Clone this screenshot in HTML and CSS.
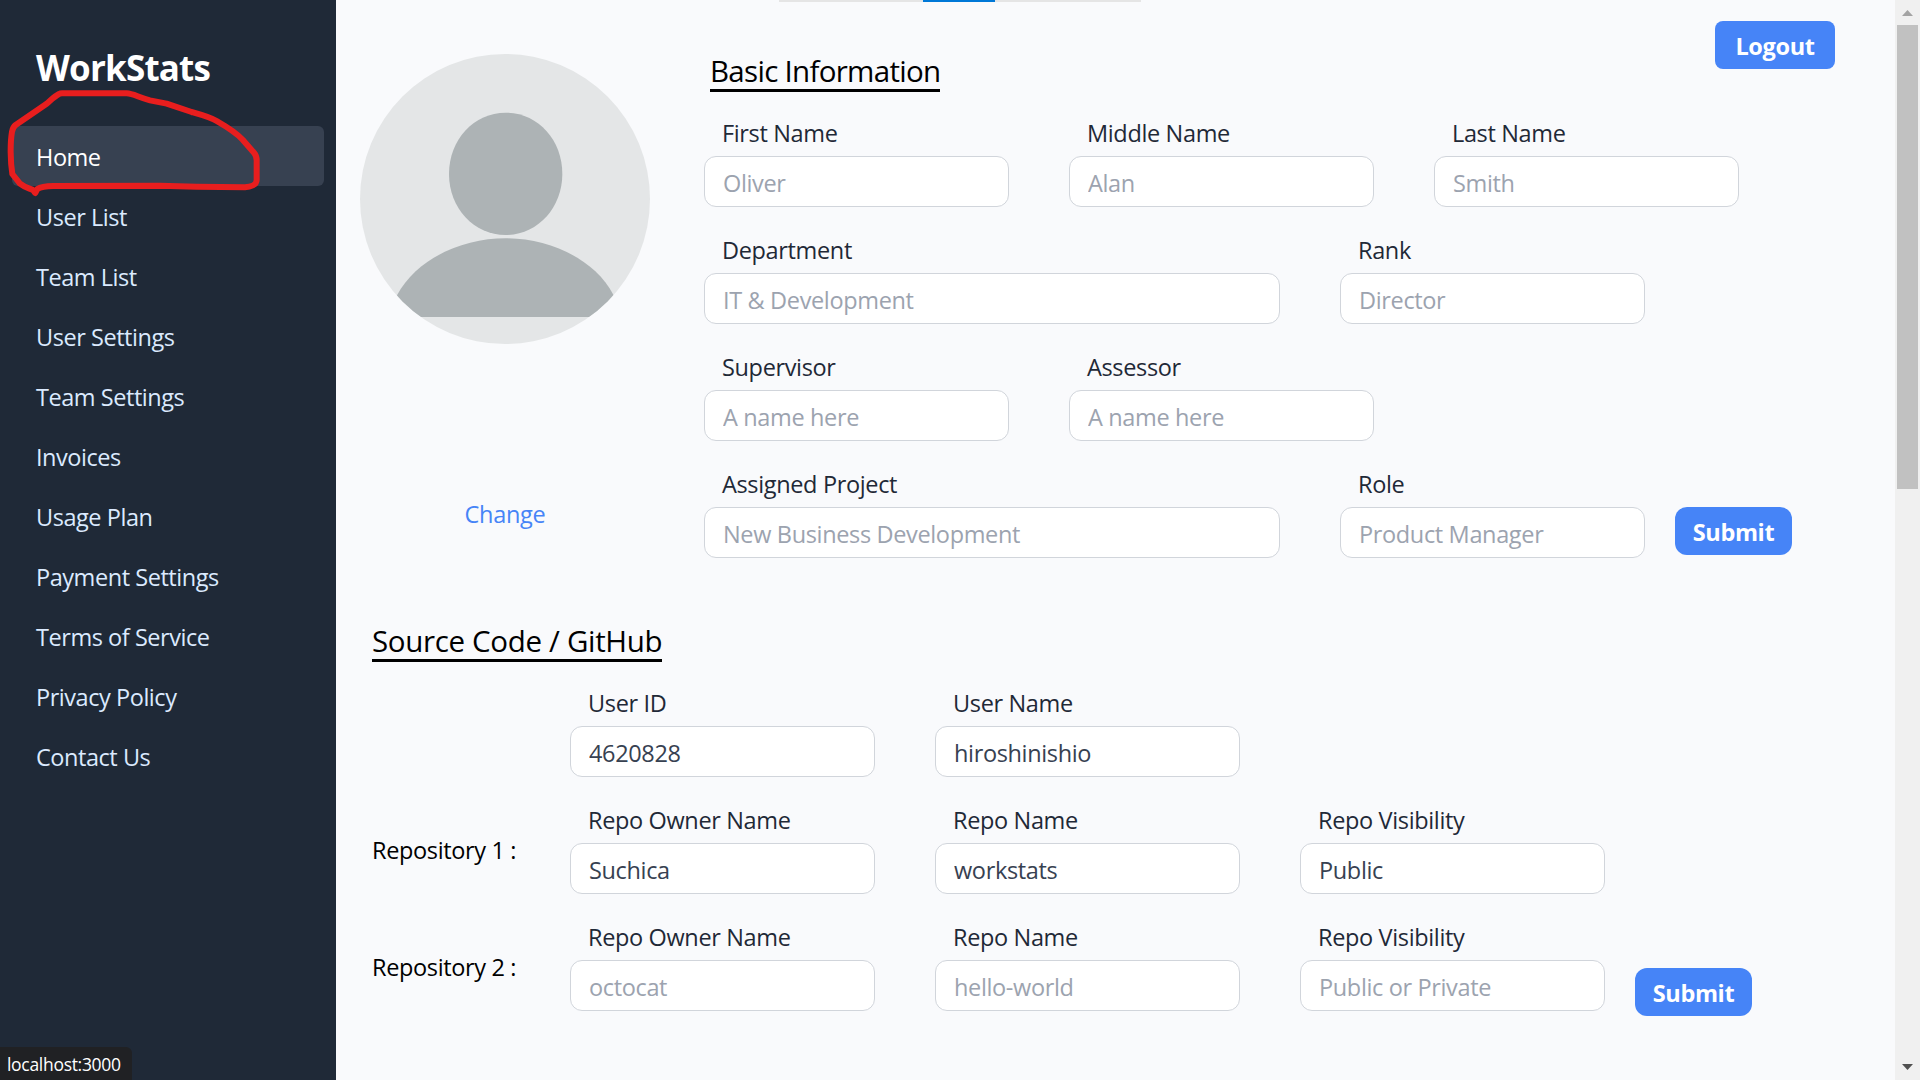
FILE: index.html
```html
<!DOCTYPE html>
<html lang="en">
<head>
<meta charset="utf-8">
<title>WorkStats</title>
<link rel="stylesheet" href="styles.css">
</head>
<body>
<div class="app">
  <aside class="sidebar">
    <h1 class="brand">WorkStats</h1>
    <nav class="nav">
      <a class="nav-item active">Home</a>
      <a class="nav-item">User List</a>
      <a class="nav-item">Team List</a>
      <a class="nav-item">User Settings</a>
      <a class="nav-item">Team Settings</a>
      <a class="nav-item">Invoices</a>
      <a class="nav-item">Usage Plan</a>
      <a class="nav-item">Payment Settings</a>
      <a class="nav-item">Terms of Service</a>
      <a class="nav-item">Privacy Policy</a>
      <a class="nav-item">Contact Us</a>
    </nav>
  </aside>

  <main class="main">
    <section class="profile">
      <div class="photo">
        <svg class="avatar" viewBox="0 0 870 870">
          <defs><clipPath id="round"><circle cx="435" cy="435" r="435"/></clipPath></defs>
          <g clip-path="url(#round)">
            <rect width="870" height="870" fill="#e4e6e7"/>
            <path fill="#adb3b5" d="M437 176C532 176 607 256 607 360C607 462 532 543 437 543C342 543 267 462 267 360C267 256 342 176 437 176Z"/>
            <path fill="#adb3b5" d="M90 789L111 724C170 612 310 553 437 553C565 553 702 612 760 722L790 789Z"/>
          </g>
        </svg>
        <a class="change">Change</a>
      </div>
      <div class="info">
        <h2 class="heading">Basic Information</h2>
        <div class="rows">
          <div class="row">
            <label class="field"><span class="label">First Name</span><input class="input" placeholder="Oliver"></label>
            <label class="field"><span class="label">Middle Name</span><input class="input" placeholder="Alan"></label>
            <label class="field"><span class="label">Last Name</span><input class="input" placeholder="Smith"></label>
          </div>
          <div class="row">
            <label class="field wide"><span class="label">Department</span><input class="input" placeholder="IT &amp; Development"></label>
            <label class="field"><span class="label">Rank</span><input class="input" placeholder="Director"></label>
          </div>
          <div class="row">
            <label class="field"><span class="label">Supervisor</span><input class="input" placeholder="A name here"></label>
            <label class="field"><span class="label">Assessor</span><input class="input" placeholder="A name here"></label>
          </div>
          <div class="row">
            <label class="field wide"><span class="label">Assigned Project</span><input class="input" placeholder="New Business Development"></label>
            <label class="field"><span class="label">Role</span><input class="input" placeholder="Product Manager"></label>
            <button class="button submit">Submit</button>
          </div>
        </div>
      </div>
    </section>

    <section class="source">
      <h2 class="heading">Source Code / GitHub</h2>
      <div class="rows">
        <div class="row">
          <span class="repo"></span>
          <label class="field"><span class="label">User ID</span><input class="input" value="4620828"></label>
          <label class="field"><span class="label">User Name</span><input class="input" value="hiroshinishio" spellcheck="false"></label>
        </div>
        <div class="row">
          <span class="repo">Repository 1 :</span>
          <label class="field"><span class="label">Repo Owner Name</span><input class="input" value="Suchica"></label>
          <label class="field"><span class="label">Repo Name</span><input class="input" value="workstats"></label>
          <label class="field"><span class="label">Repo Visibility</span><input class="input" value="Public"></label>
        </div>
        <div class="row">
          <span class="repo">Repository 2 :</span>
          <label class="field"><span class="label">Repo Owner Name</span><input class="input" placeholder="octocat"></label>
          <label class="field"><span class="label">Repo Name</span><input class="input" placeholder="hello-world"></label>
          <label class="field"><span class="label">Repo Visibility</span><input class="input" placeholder="Public or Private"></label>
          <button class="button submit low">Submit</button>
        </div>
      </div>
    </section>
  </main>

  <div class="scrollbar">
    <svg class="arrow" viewBox="0 0 25 25"><path d="M7 16L12.500 10L18 16Z" fill="#a3a3a3"/></svg>
    <div class="thumb"></div>
    <svg class="arrow down" viewBox="0 0 25 25"><path d="M7 9L12.500 15L18 9Z" fill="#505050"/></svg>
  </div>
</div>

<button class="button logout">Logout</button>
<div class="progress"><div class="progress-bar"></div></div>
<svg class="marker" viewBox="0 0 810 600">
  <path d="M105 578L100 571C92 566 75 563 60 551L37 522C31 485 30 430 36 395Q38 382 48 374L140 311C155 298 165 288 177 282Q182 279 190 280H380C400 281 415 292 450 301L500 311L575 336C600 343 630 351 650 363C690 386 715 405 728 419L762 458Q771 468 770 485V540C770 555 750 561 735 562L590 560L480 557L160 558Q125 559 112 567L106 579"/>
</svg>
<div class="status">localhost:3000</div>
</body>
</html>
```
FILE: styles.css
```css
* {
  box-sizing: border-box;
  margin: 0;
}

body {
  width: 1920px;
  height: 1080px;
  overflow: hidden;
  background: #f9fafc;
  color: #000;
  font: 23.500px/36px "Segoe UI", "Open Sans", "Noto Sans", sans-serif;
  letter-spacing: -0.350px;
}

.app {
  display: flex;
  height: 1080px;
}

.sidebar {
  width: 336px;
  padding: 44px 12px 0;
  background: #1f2937;
}

.brand {
  padding-left: 24px;
  color: #fff;
  font-size: 35px;
  font-weight: 700;
  line-height: 48px;
  letter-spacing: -0.800px;
}

.nav {
  display: flex;
  flex-direction: column;
  margin-top: 34px;
}

.nav-item {
  height: 60px;
  padding: 13px 24px 0;
  border-radius: 6px;
  color: #dbeafe;
  line-height: 36px;
  letter-spacing: -0.450px;
}

.nav-item.active {
  background: #374151;
  color: #fff;
}

.main {
  flex: 1;
}

.profile {
  display: flex;
  gap: 54px;
  padding: 54px 0 0 24px;
}

.photo {
  display: flex;
  flex-direction: column;
  justify-content: space-between;
  align-items: center;
  width: 290px;
  height: 478px;
}

.avatar {
  width: 290px;
  height: 290px;
}

.change {
  color: #4684f7;
  letter-spacing: -0.300px;
}

.heading {
  width: max-content;
  padding-bottom: 2px;
  border-bottom: 3px solid #000;
  font-size: 29.500px;
  font-weight: 400;
  line-height: 33px;
  letter-spacing: -0.330px;
}

.info .heading {
  margin-left: 6px;
  letter-spacing: -0.700px;
}

.rows {
  display: flex;
  flex-direction: column;
  gap: 26px;
  margin-top: 24px;
}

.row {
  display: flex;
  gap: 60px;
}

.field {
  display: flex;
  flex-direction: column;
  width: 305px;
}

.field.wide {
  width: 576px;
}

.label {
  height: 40px;
  padding-left: 18px;
  color: #1f2937;
  line-height: 34px;
}

.input {
  width: 100%;
  height: 51px;
  padding: 3px 18px 0;
  border: 1px solid #d1d5db;
  border-radius: 12px;
  background: #fff;
  color: #374151;
  font: inherit;
  letter-spacing: inherit;
}

.input::placeholder {
  color: #9ca3af;
  opacity: 1;
}

.button {
  border: 0;
  background: #4684f7;
  color: #fff;
  font: 700 23.500px/36px "Segoe UI", "Open Sans", "Noto Sans", sans-serif;
  letter-spacing: -0.350px;
  height: 48px;
  padding: 2px 0 0;
}

.submit {
  width: 117px;
  margin: 40px 0 0 -30px;
  border-radius: 12px;
}

.submit.low {
  margin-top: 48px;
}

.source {
  padding: 66px 0 0 36px;
}

.repo {
  width: 138px;
  padding-top: 29px;
  white-space: nowrap;
}

.scrollbar {
  display: flex;
  flex-direction: column;
  align-items: center;
  width: 25px;
  background: #f0f0f0;
}

.arrow {
  width: 25px;
  height: 25px;
}

.arrow.down {
  margin-top: auto;
}

.thumb {
  width: 21px;
  height: 464px;
  background: #c1c1c1;
}

.logout {
  position: absolute;
  top: 21px;
  left: 1715px;
  width: 120px;
  border-radius: 8px;
}

.progress {
  position: absolute;
  top: 0;
  left: 779px;
  width: 362px;
  height: 2px;
  padding-left: 144px;
  background: #e5e5e5;
}

.progress-bar {
  width: 72px;
  height: 2px;
  background: #0078d7;
}

.marker {
  position: absolute;
  top: 0;
  left: 0;
  width: 270px;
  height: 200px;
  fill: none;
  stroke: #e81e1e;
  stroke-width: 18;
  stroke-linejoin: round;
  stroke-linecap: round;
}

.status {
  position: absolute;
  left: 0;
  bottom: 0;
  width: 132px;
  height: 33px;
  padding-left: 7px;
  border-radius: 0 6px 0 0;
  background: #202124;
  color: #fff;
  font-size: 17.500px;
  letter-spacing: -0.300px;
  line-height: 34px;
}
```
